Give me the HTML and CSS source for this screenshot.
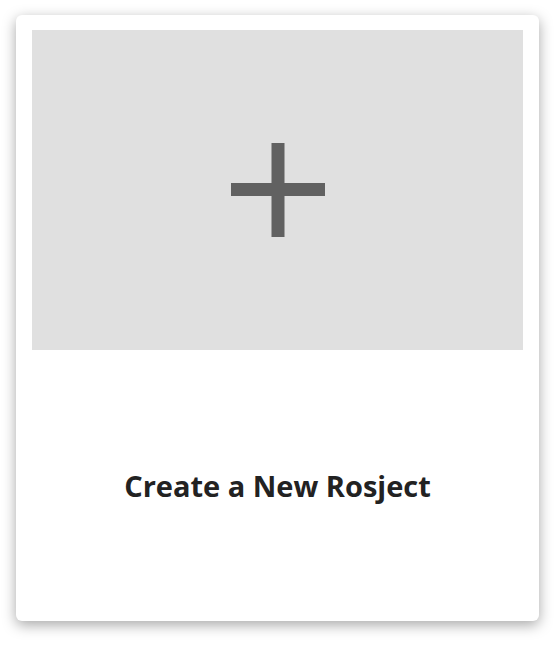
FILE: index.html
```html
<!DOCTYPE html>
<html>
<head>
<meta charset="utf-8">
<link rel="stylesheet" href="styles.css">
</head>
<body>
<div class="card">
  <div class="thumb">
    <svg class="plus" width="94" height="94" viewBox="0 0 94 94"><rect x="40.5" y="0" width="13" height="94" fill="#616161"/><rect x="0" y="40" width="94" height="13" fill="#616161"/></svg>
  </div>
  <div class="label">Create a New Rosject</div>
</div>
</body>
</html>
```
FILE: styles.css
```css
html, body { margin: 0; background: #fff; }
body { padding: 15px 0 24px 16px; }
.card {
  width: 523px;
  height: 606px;
  box-sizing: border-box;
  padding: 15px 16px 0 16px;
  background: #fff;
  border-radius: 6px;
  box-shadow: 0 4px 14px rgba(0,0,0,0.35);
  display: flex;
  flex-direction: column;
}
.thumb {
  height: 320px;
  background: #e0e0e0;
  display: flex;
  align-items: center;
  justify-content: center;
}
.plus { display: block; }
.label {
  flex: 1;
  display: flex;
  align-items: center;
  justify-content: center;
  font-family: "Open Sans", sans-serif;
  font-weight: 700;
  font-size: 29px;
  color: #222;
}
```
